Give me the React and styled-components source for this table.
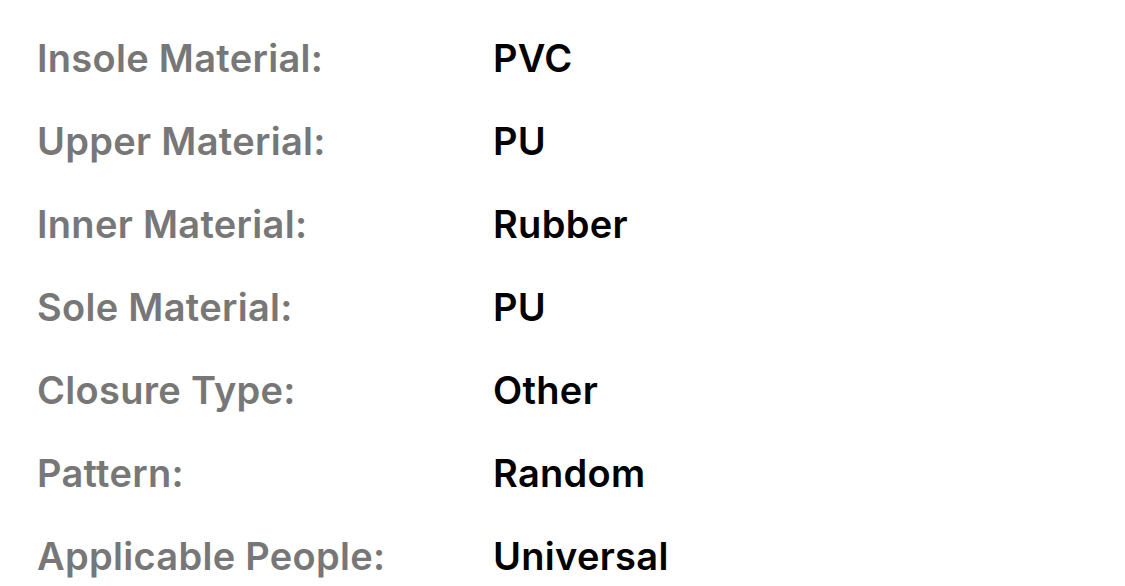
import React from 'react';
import styled, { createGlobalStyle } from 'styled-components';

const GlobalStyle = createGlobalStyle`
  html, body {
    margin: 0;
    padding: 0;
    background: #ffffff;
  }
  body {
    font-family: Inter, "Noto Sans", "Liberation Sans", sans-serif;
    -webkit-font-smoothing: antialiased;
  }
`;

const specs = [
  ['Insole Material:', 'PVC'],
  ['Upper Material:', 'PU'],
  ['Inner Material:', 'Rubber'],
  ['Sole Material:', 'PU'],
  ['Closure Type:', 'Other'],
  ['Pattern:', 'Random'],
  ['Applicable People:', 'Universal'],
];

const SpecList = styled.dl`
  margin: 0;
  padding: 16px 0 0 37px;
  display: grid;
  grid-template-columns: 456px 1fr;
  grid-auto-rows: 83px;
  align-items: center;
`;

const Label = styled.dt`
  margin: 0;
  font-size: 38px;
  font-weight: 600;
  color: #777777;
  letter-spacing: 0.3px;
  white-space: nowrap;
`;

const Value = styled.dd`
  margin: 0;
  font-size: 38px;
  font-weight: 600;
  color: #000000;
  letter-spacing: 0.3px;
  white-space: nowrap;
`;

const App = () => {
  return (
    <>
      <GlobalStyle />
      <SpecList>
        {specs.map(([label, value]) => (
          <React.Fragment key={label}>
            <Label>{label}</Label>
            <Value>{value}</Value>
          </React.Fragment>
        ))}
      </SpecList>
    </>
  );
};

export default App;
